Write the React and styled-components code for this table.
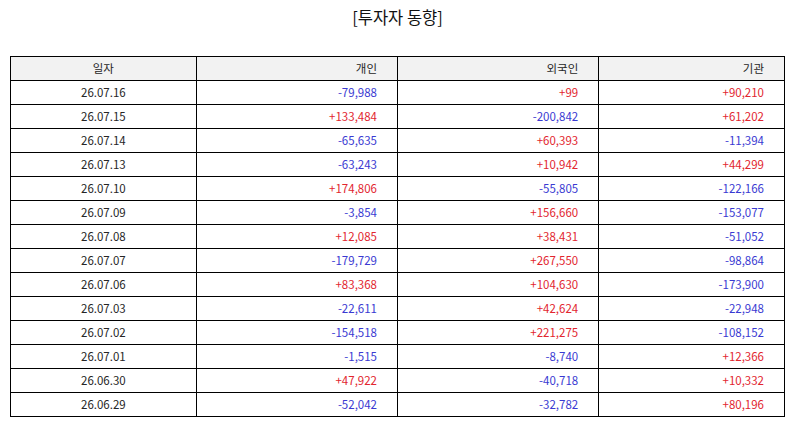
import React from "react";
import styled, { createGlobalStyle } from "styled-components";

const GlobalStyle = createGlobalStyle`
  body {
    margin: 0;
    background: #ffffff;
    font-family: "Noto Sans CJK KR", "Noto Sans", sans-serif;
    color: #222222;
  }
`;

const Page = styled.div`
  width: 795px;
  height: 425px;
  padding: 0 10px;
  box-sizing: border-box;
`;

const Title = styled.h1`
  margin: 0;
  padding-top: 5px;
  height: 56px;
  box-sizing: border-box;
  text-align: center;
  font-size: 16.5px;
  font-weight: 400;
  line-height: 24px;
  color: #111111;
`;

const Table = styled.table`
  width: 775px;
  border-collapse: collapse;
  table-layout: fixed;
  font-size: 11.5px;
`;

const Cell = styled.td`
  height: 23px;
  padding: 0;
  border: 1px solid #000000;
  line-height: 23px;
  white-space: nowrap;
  text-align: ${(p) => (p.$center ? "center" : "right")};
  padding-right: ${(p) => (p.$center ? "0" : "20px")};
  color: ${(p) =>
    p.$tone === "up" ? "#e2262f" : p.$tone === "down" ? "#3a3ad2" : "#262626"};
`;

const HeadCell = styled(Cell).attrs({ as: "th" })`
  background: #f2f2f2;
  font-weight: 400;
`;

const rows = [
  ["26.07.16", "-79,988", "+99", "+90,210"],
  ["26.07.15", "+133,484", "-200,842", "+61,202"],
  ["26.07.14", "-65,635", "+60,393", "-11,394"],
  ["26.07.13", "-63,243", "+10,942", "+44,299"],
  ["26.07.10", "+174,806", "-55,805", "-122,166"],
  ["26.07.09", "-3,854", "+156,660", "-153,077"],
  ["26.07.08", "+12,085", "+38,431", "-51,052"],
  ["26.07.07", "-179,729", "+267,550", "-98,864"],
  ["26.07.06", "+83,368", "+104,630", "-173,900"],
  ["26.07.03", "-22,611", "+42,624", "-22,948"],
  ["26.07.02", "-154,518", "+221,275", "-108,152"],
  ["26.07.01", "-1,515", "-8,740", "+12,366"],
  ["26.06.30", "+47,922", "-40,718", "+10,332"],
  ["26.06.29", "-52,042", "-32,782", "+80,196"],
];

const tone = (v) => (v.startsWith("+") ? "up" : "down");

export default function App() {
  return (
    <Page>
      <GlobalStyle />
      <Title>[투자자 동향]</Title>
      <Table>
        <colgroup>
          <col style={{ width: "24%" }} />
          <col style={{ width: "26%" }} />
          <col style={{ width: "26%" }} />
          <col style={{ width: "24%" }} />
        </colgroup>
        <thead>
          <tr>
            <HeadCell $center>일자</HeadCell>
            <HeadCell>개인</HeadCell>
            <HeadCell>외국인</HeadCell>
            <HeadCell>기관</HeadCell>
          </tr>
        </thead>
        <tbody>
          {rows.map(([date, ind, frn, inst]) => (
            <tr key={date}>
              <Cell $center>{date}</Cell>
              <Cell $tone={tone(ind)}>{ind}</Cell>
              <Cell $tone={tone(frn)}>{frn}</Cell>
              <Cell $tone={tone(inst)}>{inst}</Cell>
            </tr>
          ))}
        </tbody>
      </Table>
    </Page>
  );
}
